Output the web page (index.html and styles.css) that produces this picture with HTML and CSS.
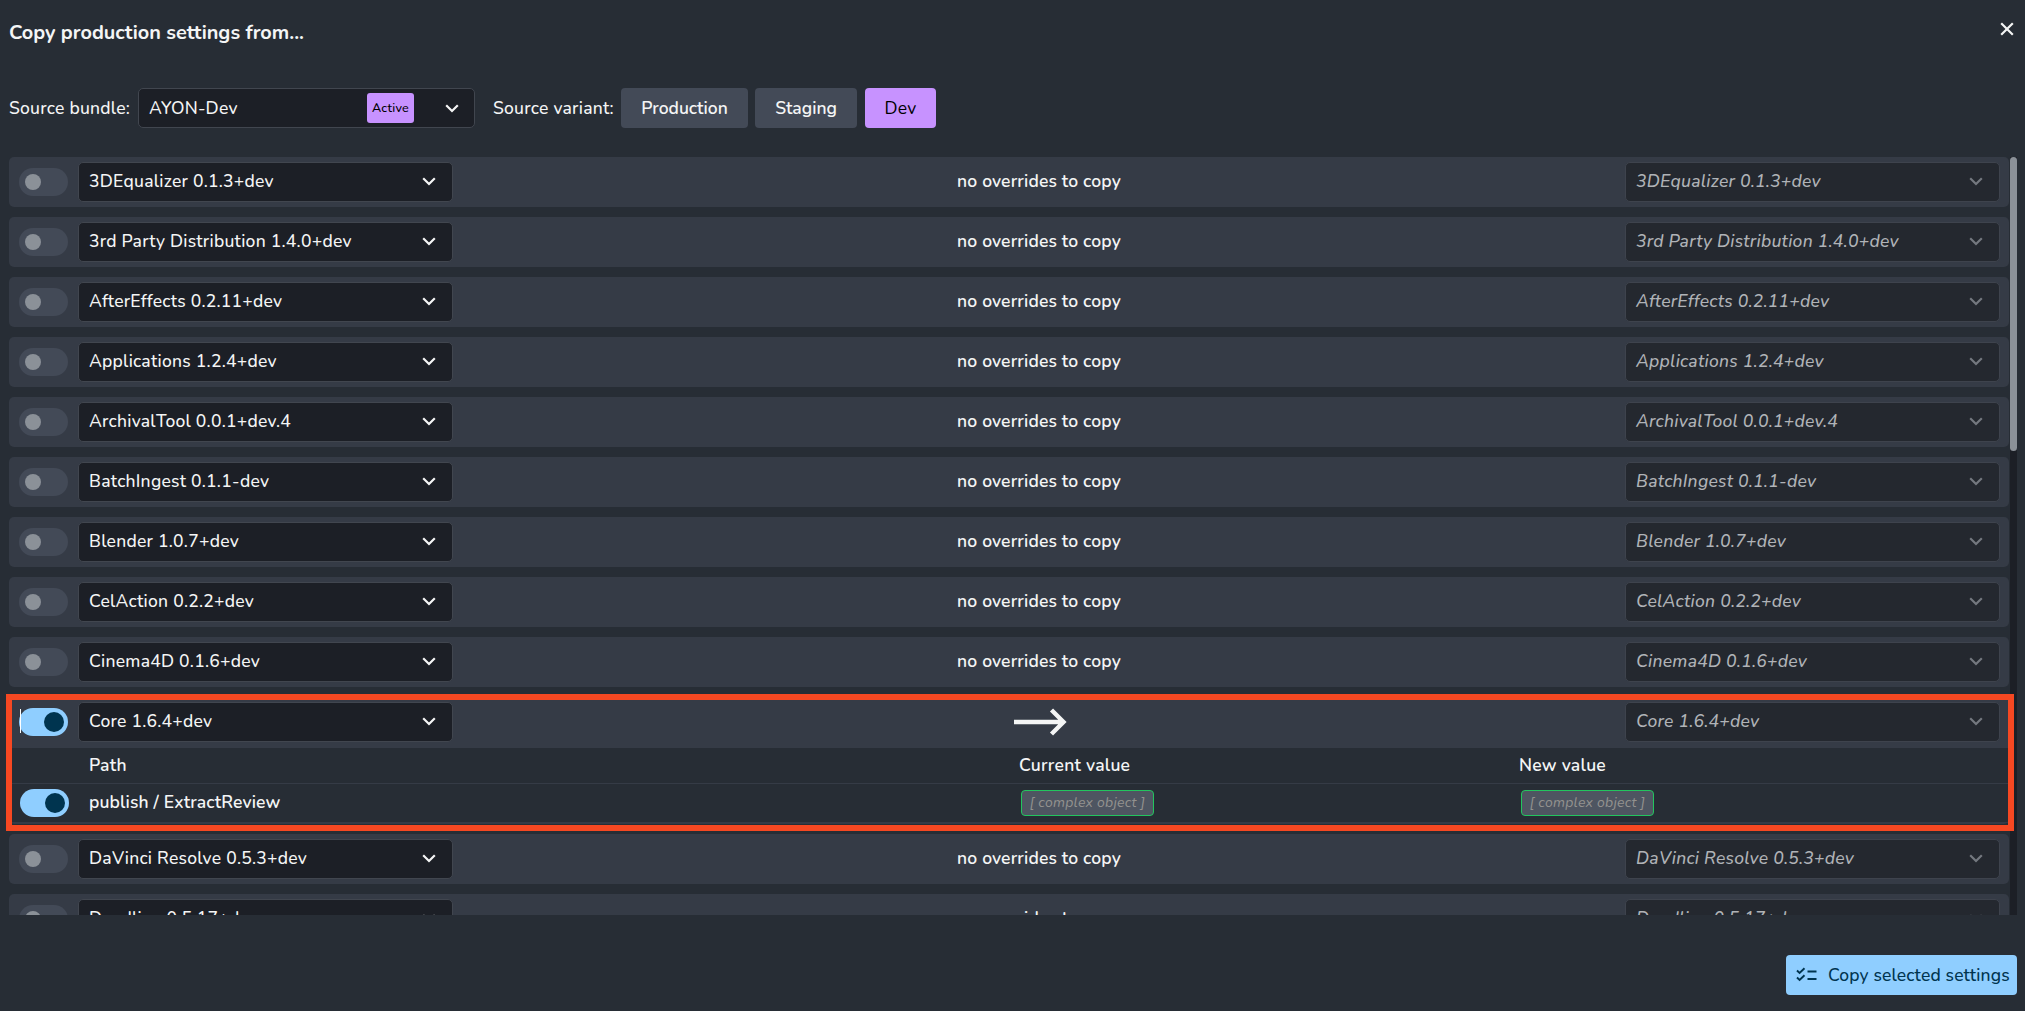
FILE: index.html
```html
<!DOCTYPE html>
<html lang="en">
<head>
<meta charset="utf-8">
<title>Copy production settings</title>
<link rel="stylesheet" href="styles.css">
</head>
<body>
<svg class="defs" width="0" height="0">
  <symbol id="chev" viewBox="0 0 14 9"><path d="M1.2 1.2 7 7l5.800-5.800" fill="none" stroke="currentColor" stroke-width="2.200"/></symbol>
</svg>
<div class="dialog">
  <header class="head">
    <h1 class="title">Copy production settings from...</h1>
    <button class="close" aria-label="Close"><svg width="14" height="14" viewBox="0 0 14 14"><path d="M1.200 1.200 12.800 12.800M12.800 1.200 1.200 12.800" stroke="currentColor" stroke-width="2.200"/></svg></button>
  </header>
  <div class="source">
    <span class="label">Source bundle:</span>
    <div class="select bundle"><span class="name">AYON-Dev</span><span class="active">Active</span><svg class="chev"><use href="#chev"/></svg></div>
    <span class="label variant">Source variant:</span>
    <button class="btn production">Production</button>
    <button class="btn staging">Staging</button>
    <button class="btn dev">Dev</button>
  </div>
  <div class="scroller">
    <div class="list">
      <div class="row"><span class="switch"></span><div class="select"><span class="name">3DEqualizer 0.1.3+dev</span><svg class="chev"><use href="#chev"/></svg></div><span class="msg">no overrides to copy</span><div class="select off"><span class="name">3DEqualizer 0.1.3+dev</span><svg class="chev"><use href="#chev"/></svg></div></div>
      <div class="row"><span class="switch"></span><div class="select"><span class="name">3rd Party Distribution 1.4.0+dev</span><svg class="chev"><use href="#chev"/></svg></div><span class="msg">no overrides to copy</span><div class="select off"><span class="name">3rd Party Distribution 1.4.0+dev</span><svg class="chev"><use href="#chev"/></svg></div></div>
      <div class="row"><span class="switch"></span><div class="select"><span class="name">AfterEffects 0.2.11+dev</span><svg class="chev"><use href="#chev"/></svg></div><span class="msg">no overrides to copy</span><div class="select off"><span class="name">AfterEffects 0.2.11+dev</span><svg class="chev"><use href="#chev"/></svg></div></div>
      <div class="row"><span class="switch"></span><div class="select"><span class="name">Applications 1.2.4+dev</span><svg class="chev"><use href="#chev"/></svg></div><span class="msg">no overrides to copy</span><div class="select off"><span class="name">Applications 1.2.4+dev</span><svg class="chev"><use href="#chev"/></svg></div></div>
      <div class="row"><span class="switch"></span><div class="select"><span class="name">ArchivalTool 0.0.1+dev.4</span><svg class="chev"><use href="#chev"/></svg></div><span class="msg">no overrides to copy</span><div class="select off"><span class="name">ArchivalTool 0.0.1+dev.4</span><svg class="chev"><use href="#chev"/></svg></div></div>
      <div class="row"><span class="switch"></span><div class="select"><span class="name">BatchIngest 0.1.1-dev</span><svg class="chev"><use href="#chev"/></svg></div><span class="msg">no overrides to copy</span><div class="select off"><span class="name">BatchIngest 0.1.1-dev</span><svg class="chev"><use href="#chev"/></svg></div></div>
      <div class="row"><span class="switch"></span><div class="select"><span class="name">Blender 1.0.7+dev</span><svg class="chev"><use href="#chev"/></svg></div><span class="msg">no overrides to copy</span><div class="select off"><span class="name">Blender 1.0.7+dev</span><svg class="chev"><use href="#chev"/></svg></div></div>
      <div class="row"><span class="switch"></span><div class="select"><span class="name">CelAction 0.2.2+dev</span><svg class="chev"><use href="#chev"/></svg></div><span class="msg">no overrides to copy</span><div class="select off"><span class="name">CelAction 0.2.2+dev</span><svg class="chev"><use href="#chev"/></svg></div></div>
      <div class="row"><span class="switch"></span><div class="select"><span class="name">Cinema4D 0.1.6+dev</span><svg class="chev"><use href="#chev"/></svg></div><span class="msg">no overrides to copy</span><div class="select off"><span class="name">Cinema4D 0.1.6+dev</span><svg class="chev"><use href="#chev"/></svg></div></div>
      <section class="group">
        <div class="row"><span class="switch on caret"></span><div class="select"><span class="name">Core 1.6.4+dev</span><svg class="chev"><use href="#chev"/></svg></div><span class="msg"><svg class="arrow" width="54" height="28" viewBox="0 0 54 28"><path d="M0 14H50M37.500 2 49.500 14 37.500 26" fill="none" stroke="currentColor" stroke-width="4.400"/></svg></span><div class="select off"><span class="name">Core 1.6.4+dev</span><svg class="chev"><use href="#chev"/></svg></div></div>
        <div class="line thead"><span></span><span>Path</span><span>Current value</span><span>New value</span></div>
        <div class="line"><span class="switch on"></span><span class="path">publish / ExtractReview</span><span><em class="chip">[ complex object ]</em></span><span><em class="chip">[ complex object ]</em></span></div>
      </section>
      <div class="row"><span class="switch"></span><div class="select"><span class="name">DaVinci Resolve 0.5.3+dev</span><svg class="chev"><use href="#chev"/></svg></div><span class="msg">no overrides to copy</span><div class="select off"><span class="name">DaVinci Resolve 0.5.3+dev</span><svg class="chev"><use href="#chev"/></svg></div></div>
      <div class="row"><span class="switch"></span><div class="select"><span class="name">Deadline 0.5.17+dev</span><svg class="chev"><use href="#chev"/></svg></div><span class="msg">no overrides to copy</span><div class="select off"><span class="name">Deadline 0.5.17+dev</span><svg class="chev"><use href="#chev"/></svg></div></div>
    </div>
    <div class="track"><div class="thumb"></div></div>
  </div>
  <footer class="foot">
    <button class="copy"><svg width="21" height="15" viewBox="0 0 21 15"><path d="M1 3.500 3.600 6 8.500 1.200M1 10.500 3.600 13 8.500 8.200M11.500 4.500H20.500M11.500 12H20.500" fill="none" stroke="currentColor" stroke-width="1.900"/></svg><span>Copy selected settings</span></button>
  </footer>
</div>
</body>
</html>
```
FILE: styles.css
```css
*, *::before, *::after { box-sizing: border-box; }
body {
  margin: 0;
  height: 1011px;
  overflow: hidden;
  background: #272d35;
  color: #f4f5f5;
  font: 500 17.500px/24px Nunito, "Nunito Sans", Lato, sans-serif;
  letter-spacing: .25px;
  white-space: nowrap;
}
button { border: 0; padding: 0; margin: 0; background: none; color: inherit; font: inherit; letter-spacing: inherit; }
svg { display: block; flex: none; }
.defs { position: absolute; }
.dialog { height: 1011px; padding: 0 8px 16px 9px; display: flex; flex-direction: column; }

.head { height: 88px; display: flex; justify-content: space-between; align-items: flex-start; }
.title { margin: 21px 0 0; font-size: 19.900px; font-weight: 700; line-height: 24px; letter-spacing: 0; }
.close { margin: 22px 3px 0 0; }

.source { height: 40px; display: flex; align-items: center; flex: none; }
.label { width: 129px; }
.variant { width: 128px; margin-left: 18px; }
.btn { height: 40px; border-radius: 4px; background: #434a57; font-weight: 600; letter-spacing: 0; }
.production { width: 127px; }
.staging { width: 102px; margin-left: 7px; }
.dev { width: 71px; margin-left: 8px; background: #c792ff; color: #000; font-weight: 400; letter-spacing: .25px; }

.select {
  width: 375px; height: 40px;
  display: flex; align-items: center; flex: none;
  padding: 0 16px 1px 10px;
  border: 1px solid #41464f; border-radius: 5px;
  background: #1c1f26;
}
.bundle { width: 337px; padding: 0 15px 0 10px; }
.name { flex: 1; }
.row .name { padding-bottom: 1px; }
.chev { width: 14px; height: 9px; }
.active {
  width: 47px; height: 30px; margin-right: 31px;
  border-radius: 3px; background: #c792ff; color: #000;
  font-size: 12.500px; font-weight: 500; line-height: 30px; text-align: center;
}
.off { border-color: #3e434d; background: #24282f; color: #b0b3b7; font-style: italic; }
.off .chev { color: #74787f; }

.scroller { height: 758px; margin-top: 29px; display: flex; gap: 1px; overflow-x: visible; overflow-y: clip; flex: none; }
.list { width: 2000px; display: flex; flex-direction: column; gap: 10px; }
.row {
  height: 50px; flex: none;
  display: flex; align-items: center;
  padding: 0 9px 0 10px;
  border-radius: 5px; background: #353b46;
}
.switch {
  width: 49px; height: 28px; flex: none;
  display: flex; align-items: center; padding: 0 6px;
  border-radius: 14px; background: #434a57;
}
.switch::after { content: ""; width: 16px; height: 16px; border-radius: 50%; background: #8b9198; }
.row .switch { margin-right: 10px; }
.switch.on { justify-content: flex-end; padding: 0 4px; background: #8fceff; }
.switch.on::after { width: 20px; height: 20px; background: #00344f; }
.caret { position: relative; }
.caret::before { content: ""; position: absolute; left: 1px; top: 1px; width: 1px; height: 24px; background: #fff; }
.msg { flex: 1; display: flex; justify-content: center; padding-bottom: 2px; font-weight: 600; letter-spacing: .15px; }
.arrow { margin: 1px 0 0 4px; }

.group { position: relative; z-index: 1; height: 127px; flex: none; border-radius: 5px; background: #272d35; border-bottom: 1px solid #353b46; }
.group .row { height: 51px; padding-bottom: 1px; border-radius: 5px 5px 0 0; }
.group::after {
  content: ""; position: absolute; left: -3px; top: -3px; width: 2008px; height: 137px;
  border: 6px solid #f64822;
}
.line { display: grid; grid-template-columns: 80px 930px 500px 490px; align-items: center; height: 39px; border-bottom: 1px solid #353b46; }
.thead { height: 36px; padding-bottom: 1px; font-weight: 600; }
.line .switch { margin-left: 11px; }
.path { font-weight: 600; letter-spacing: .15px; padding-bottom: 2px; }
.chip {
  display: block; width: 133px; height: 26px; margin-left: 2px;
  border: 1px solid #22c55e; border-radius: 4px; background: #4e5561; color: #93928f;
  font-size: 14px; font-weight: 400; line-height: 24px; text-align: center; 
}

.track { width: 7px; height: 758px; background: #1c1f26; }
.thumb { height: 294px; border-radius: 4px; background: #8b9198; }

.foot { margin-top: 40px; display: flex; justify-content: flex-end; }
.copy {
  width: 231px; height: 40px; display: flex; align-items: center; gap: 11px; padding: 0 0 1px 10px;
  border-radius: 4px; background: #8fceff; color: #00344f; font-weight: 500; letter-spacing: .14px;
}
```
